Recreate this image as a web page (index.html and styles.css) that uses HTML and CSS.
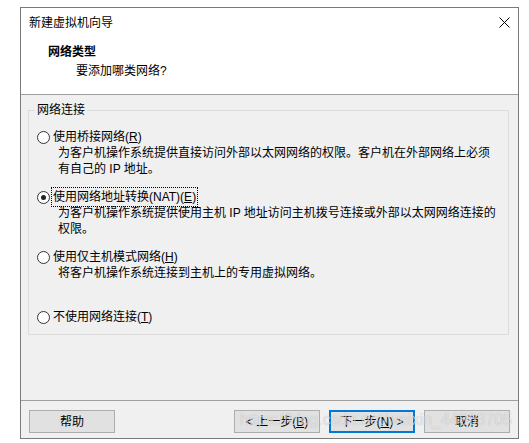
FILE: index.html
```html
<!DOCTYPE html>
<html lang="zh-CN">
<head>
<meta charset="utf-8">
<title>新建虚拟机向导</title>
<link rel="stylesheet" href="styles.css">
</head>
<body>
<div class="dialog">
  <div class="header">
    <div class="titlebar">
      <span class="title">新建虚拟机向导</span>
      <svg class="close" width="11" height="11" viewBox="0 0 11 11"><path d="M0.5 0.5 L10.5 10.5 M10.5 0.5 L0.5 10.5" stroke="#000" stroke-width="1" fill="none"/></svg>
    </div>
    <div class="heading">网络类型</div>
    <div class="subheading">要添加哪类网络?</div>
  </div>
  <div class="content">
    <fieldset class="group">
      <legend>网络连接</legend>
      <div class="option">
        <div class="opt-label"><span class="radio"></span><span class="opt-text">使用桥接网络(<u>R</u>)</span></div>
        <div class="desc">为客户机操作系统提供直接访问外部以太网网络的权限。客户机在外部网络上必须<br>有自己的 IP 地址。</div>
      </div>
      <div class="option">
        <div class="opt-label"><span class="radio checked"></span><span class="opt-text focus">使用网络地址转换(NAT)(<u>E</u>)</span></div>
        <div class="desc">为客户机操作系统提供使用主机 IP 地址访问主机拨号连接或外部以太网网络连接的<br>权限。</div>
      </div>
      <div class="option">
        <div class="opt-label"><span class="radio"></span><span class="opt-text">使用仅主机模式网络(<u>H</u>)</span></div>
        <div class="desc">将客户机操作系统连接到主机上的专用虚拟网络。</div>
      </div>
      <div class="option last">
        <div class="opt-label"><span class="radio"></span><span class="opt-text">不使用网络连接(<u>T</u>)</span></div>
      </div>
    </fieldset>
  </div>
  <div class="footer">
    <button class="btn">帮助</button>
    <div class="nav">
      <button class="btn">&lt; 上一步(<u>B</u>)</button>
      <button class="btn default">下一步(<u>N</u>) &gt;</button>
      <button class="btn">取消</button>
    </div>
  </div>
</div>
<div class="watermark">https://blog.csdn.net/weixin_44863705</div>
</body>
</html>
```
FILE: styles.css
```css
html, body {
  margin: 0;
  padding: 0;
  background: #ffffff;
}
body {
  font-family: "Liberation Sans", "Noto Sans CJK SC", sans-serif;
  font-size: 12px;
  line-height: 16px;
  color: #000;
  position: relative;
  width: 529px;
  height: 443px;
  overflow: hidden;
}
.dialog {
  box-sizing: border-box;
  width: 499px;
  height: 432px;
  margin: 7px 0 0 20px;
  border: 1px solid #7a7a7a;
  display: flex;
  flex-direction: column;
  background: #f0f0f0;
}
.header {
  background: #ffffff;
  height: 86px;
  border-bottom: 1px solid #a0a0a0;
  flex: none;
}
.titlebar {
  height: 29px;
  display: flex;
  align-items: center;
  justify-content: space-between;
  padding: 0 8px 0 8px;
}
.title {
  color: #000;
}
.close {
  display: block;
}
.heading {
  margin-top: 7px;
  padding-left: 27px;
  font-weight: bold;
}
.subheading {
  margin-top: 3px;
  padding-left: 55px;
}
.content {
  flex: 1;
  padding: 7px 0 0 7px;
}
.group {
  box-sizing: border-box;
  width: 481px;
  margin: 0;
  padding: 11px 0 9px 0;
  border: 1px solid #dcdcdc;
}
.group legend {
  margin-left: 6px;
  padding: 0 2px;
  line-height: 16px;
}
.option {
  height: 60px;
}
.option.last {
  height: 16px;
}
.opt-label {
  display: flex;
  align-items: center;
  height: 16px;
  padding-left: 8px;
}
.radio {
  box-sizing: border-box;
  width: 13px;
  height: 13px;
  border: 1px solid #333333;
  border-radius: 50%;
  background: #ffffff;
  margin-right: 3px;
  display: flex;
  align-items: center;
  justify-content: center;
  flex: none;
}
.radio.checked::after {
  content: "";
  width: 5px;
  height: 5px;
  border-radius: 50%;
  background: #222222;
}
.opt-text.focus {
  outline: 1px dotted #000;
  outline-offset: 1px;
}
.desc {
  padding-left: 29px;
}
.footer {
  flex: none;
  height: 38px;
  border-top: 1px solid #a0a0a0;
  box-sizing: border-box;
  padding: 9px 8px 0 8px;
  display: flex;
  justify-content: space-between;
  align-items: flex-start;
}
.nav {
  display: flex;
  gap: 9px;
}
.btn {
  box-sizing: border-box;
  width: 86px;
  height: 23px;
  border: 1px solid #adadad;
  background: #e1e1e1;
  font-family: inherit;
  font-size: 12px;
  color: #000;
  padding: 0;
  margin: 0;
  line-height: 16px;
}
.btn.default {
  border: 2px solid #0078d7;
}
.watermark {
  position: absolute;
  left: 240px;
  top: 410px;
  font-family: "Liberation Sans", sans-serif;
  font-size: 16px;
  line-height: 20px;
  color: rgba(255, 255, 255, 0.6);
  text-shadow: 0 0 1px rgba(0, 0, 0, 0.25);
  white-space: nowrap;
  pointer-events: none;
}
```
